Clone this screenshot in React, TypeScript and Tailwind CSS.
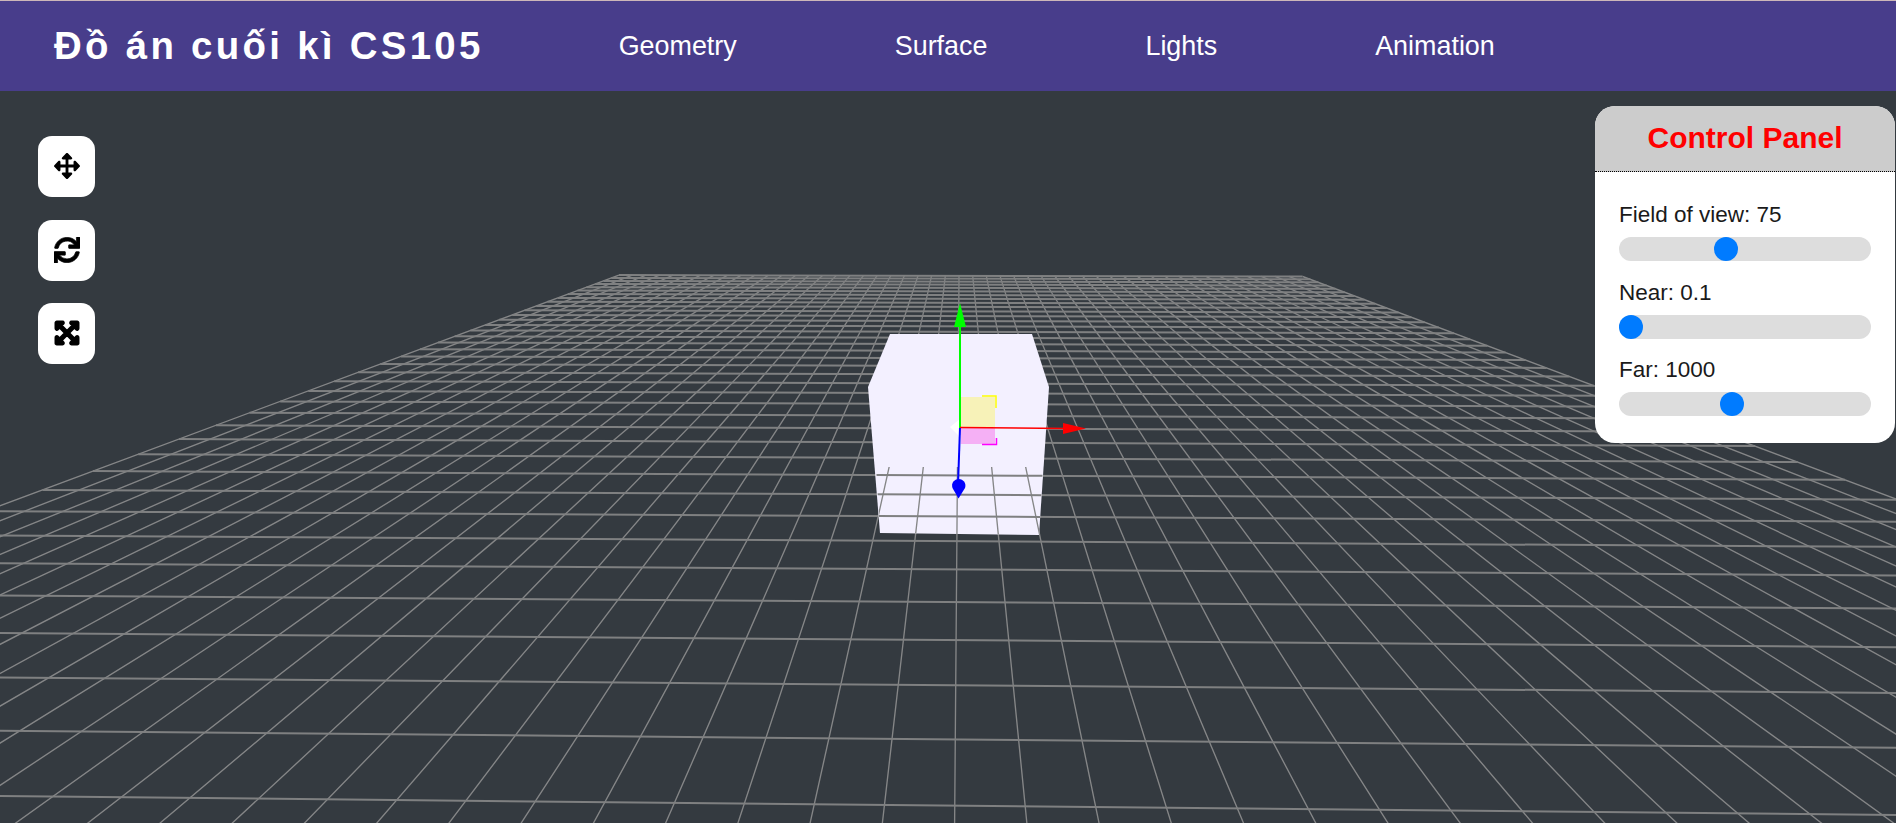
import React from "react";
import { FaArrowsAlt, FaSync, FaExpandArrowsAlt } from "react-icons/fa";

const H = 148;
const XV = 960;
const W0 = 0.001543;
const B = 0.0001729;
const L = 65000;
const T0 = -0.008;
const Q = 0.107;

function pt(X: number, k: number): [number, number] {
  const Yk = 1 / (W0 + B * k);
  const t = T0 + Q * X;
  const dy = (Yk * (1 + XV / L)) / (1 - (Yk * t) / L);
  return [XV + t * dy, H + dy];
}

function gridPaths() {
  let rows = "";
  let cols = "";
  for (let k = 37; k >= -7; k--) {
    const a = pt(-25, k);
    const b = pt(25, k);
    rows += `M${a[0].toFixed(1)} ${a[1].toFixed(1)}L${b[0].toFixed(1)} ${b[1].toFixed(1)}`;
  }
  for (let X = -25; X <= 25; X++) {
    const a = pt(X, 37);
    const b = pt(X, -7);
    cols += `M${a[0].toFixed(1)} ${a[1].toFixed(1)}L${b[0].toFixed(1)} ${b[1].toFixed(1)}`;
  }
  return { rows, cols };
}

function Scene() {
  const { rows, cols } = gridPaths();
  const grid = (
    <>
      <path d={cols} stroke="#858687" strokeWidth="1.35" fill="none" />
      <path d={rows} stroke="#7f8081" strokeWidth="2" fill="none" />
    </>
  );
  return (
    <svg className="absolute inset-0 w-full h-full" viewBox="0 91 1896 732" preserveAspectRatio="none">
      <defs>
        <clipPath id="cubeFront">
          <polygon points="876,467 1043,467 1039,535 880,533" />
        </clipPath>
      </defs>
      {grid}
      <polygon points="890,334 1032,334 1049,387 1039,535 880,533 868,387" fill="#f3f0ff" />
      <g clipPath="url(#cubeFront)">{grid}</g>
      <rect x="961" y="397" width="34" height="30" fill="#f7f2b8" />
      <rect x="961" y="428" width="34" height="16" fill="#f5b0f5" />
      <path d="M982 396H996V408" stroke="#ffff00" strokeWidth="1.5" fill="none" />
      <path d="M982 444.5H996.5V438" stroke="#ff00ff" strokeWidth="1.5" fill="none" />
      <polygon points="950,427 960,419 960,437" fill="#ffffff" />
      <line x1="960" y1="428" x2="960" y2="320" stroke="#00ff00" strokeWidth="2" />
      <polygon points="960,303 966,327 954,327" fill="#00ff00" />
      <line x1="960" y1="427.5" x2="1066" y2="428.5" stroke="#ff0000" strokeWidth="1.6" />
      <polygon points="1086,428.5 1063,423 1063,434" fill="#ff0000" />
      <line x1="960" y1="428" x2="958" y2="485" stroke="#0000ff" strokeWidth="2" />
      <path d="M958.5 498.5L952.5 488A6.7 6.7 0 1 1 965 488Z" fill="#0000ff" />
    </svg>
  );
}

function Slider({ label, min, max, value }: { label: string; min: number; max: number; value: number }) {
  return (
    <div className="flex flex-col">
      <label className="text-[22.5px] leading-[26px] text-[#1a1a1a] mb-[9px]">{label}</label>
      <input
        type="range"
        min={min}
        max={max}
        step="any"
        defaultValue={value}
        className="block w-full h-6 rounded-full bg-[#dddddd] appearance-none outline-none [&::-webkit-slider-thumb]:appearance-none [&::-webkit-slider-thumb]:w-6 [&::-webkit-slider-thumb]:h-6 [&::-webkit-slider-thumb]:rounded-full [&::-webkit-slider-thumb]:bg-[#007bff]"
      />
    </div>
  );
}

function ToolButton({ children }: { children: React.ReactNode }) {
  return (
    <button className="flex items-center justify-center w-[57px] h-[61px] rounded-[14px] bg-white text-black text-[26px] pb-[1px]">
      {children}
    </button>
  );
}

export default function App() {
  return (
    <div className="flex flex-col h-screen overflow-hidden font-['Liberation_Sans',Arial,sans-serif] bg-[#343a40]">
      <header className="flex items-center h-[91px] shrink-0 border-t border-[#cdb7b9] bg-[#483d8b] text-white pl-[54px]">
        <h1 className="text-[38.4px] font-bold tracking-[3.3px] whitespace-nowrap mr-[135px] pb-[1px]">Đồ án cuối kì CS105</h1>
        <nav className="flex items-center gap-[158px] text-[26.9px]">
          <a>Geometry</a>
          <a>Surface</a>
          <a>Lights</a>
          <a>Animation</a>
        </nav>
      </header>
      <main className="relative flex-1">
        <Scene />
        <div className="absolute left-[38px] top-[45px] flex flex-col gap-[22.5px]">
          <ToolButton><FaArrowsAlt /></ToolButton>
          <ToolButton><FaSync stroke="currentColor" strokeWidth={14} /></ToolButton>
          <ToolButton><FaExpandArrowsAlt stroke="currentColor" strokeWidth={44} /></ToolButton>
        </div>
        <aside className="absolute right-[1px] top-[15px] w-[300px] rounded-[20px] bg-white overflow-hidden">
          <div className="flex items-center justify-center h-[66px] bg-[#cccccc] border-b border-dotted border-black">
            <h2 className="text-[30px] font-bold text-[#ff0000] pb-[2px]">Control Panel</h2>
          </div>
          <div className="flex flex-col gap-[18.5px] px-6 pt-[30px] pb-[27px]">
            <Slider label="Field of view: 75" min={0} max={180} value={75} />
            <Slider label="Near: 0.1" min={0.1} max={100} value={0.1} />
            <Slider label="Far: 1000" min={0} max={2256} value={1000} />
          </div>
        </aside>
      </main>
    </div>
  );
}
